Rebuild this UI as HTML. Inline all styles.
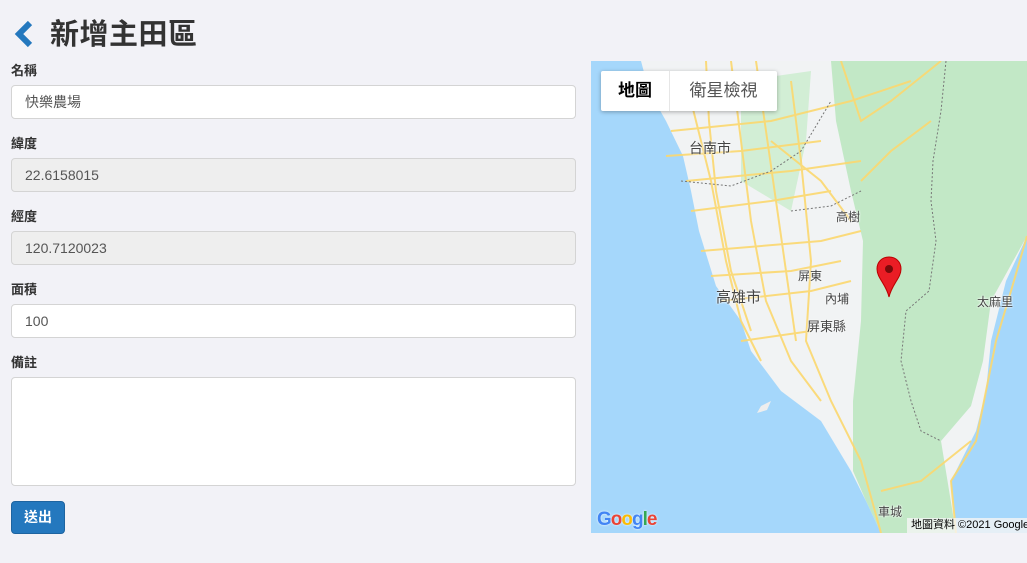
<!DOCTYPE html>
<html><head><meta charset="utf-8"><style>
*{box-sizing:border-box;margin:0;padding:0}
body{width:1027px;height:563px;background:#f2f2f7;font-family:"Liberation Sans","Noto Sans CJK TC",sans-serif;position:relative;overflow:hidden;color:#333}
.t{position:absolute;left:50px;top:15px;font-size:29px;font-weight:bold;color:#333;line-height:40px;letter-spacing:0.5px}
.lb{position:absolute;left:11px;font-size:13px;font-weight:bold;color:#333;line-height:16px}
.in{position:absolute;left:11px;width:565px;height:34px;border:1px solid #d4d4d4;border-radius:4px;background:#fff;font-size:14px;color:#555;padding-left:13px;line-height:32px}
.ro{background:#eee}
.btn{position:absolute;left:11px;top:501px;width:54px;height:33px;background:#2478be;border:1px solid #1e64a0;border-radius:4px;color:#fff;font-size:14px;font-weight:bold;text-align:center;line-height:31px}
.map{position:absolute;left:591px;top:61px;width:436px;height:472px;overflow:hidden;background:#f1f3f4}
.ml{position:absolute;font-size:13px;color:#444;text-shadow:0 0 2px #fff,0 0 2px #fff}
</style></head><body>
<svg style="position:absolute;left:12px;top:20px" width="22" height="28" viewBox="0 0 22 28"><path d="M18 3 L7 14 L18 25" fill="none" stroke="#2478be" stroke-width="6"/></svg>
<div class="t">新增主田區</div>
<div class="lb" style="top:63px">名稱</div>
<div class="in" style="top:85px">快樂農場</div>
<div class="lb" style="top:136px">緯度</div>
<div class="in ro" style="top:158px">22.6158015</div>
<div class="lb" style="top:209px">經度</div>
<div class="in ro" style="top:231px">120.7120023</div>
<div class="lb" style="top:282px">面積</div>
<div class="in" style="top:304px">100</div>
<div class="lb" style="top:355px">備註</div>
<div class="in" style="top:377px;height:109px"></div>
<div class="btn">送出</div>
<div class="map">
<svg width="436" height="472" style="position:absolute;left:0;top:0">
<path d="M240 0 L436 0 L436 175 L400 240 L392 300 L380 345 L350 380 L365 472 L290 472 L275 440 L262 410 L262 340 L270 260 L272 180 L260 130 L245 60 Z" fill="#c2e8c6"/>
<path d="M150 20 L220 10 L215 80 L200 150 L150 120 Z" fill="#d2eed5"/>
<path d="M0 0 L50 0 L58 30 L75 60 L92 95 L100 130 L108 170 L125 225 L150 260 L160 290 L190 330 L230 360 L260 410 L275 440 L290 472 L0 472 Z" fill="#a5d7fb"/>
<path d="M436 175 L436 472 L366 472 L360 420 L385 370 L395 330 L400 280 L415 220 Z" fill="#a5d7fb"/>
<g fill="none" stroke="#fcd86f" stroke-width="2" opacity=".9">
<path d="M100 40 L120 120 L135 200 L150 260 L170 300"/>
<path d="M115 0 L118 60 L125 130 L140 210 L160 270"/>
<path d="M140 0 L150 80 L160 160 L175 240 L200 300 L230 340"/>
<path d="M165 0 L175 70 L185 140 L195 210 L205 280"/>
<path d="M80 70 L180 60 L260 40 L320 20"/>
<path d="M75 95 L150 90 L230 80"/>
<path d="M95 120 L200 110 L270 100"/>
<path d="M100 150 L180 140 L240 130"/>
<path d="M110 190 L230 180 L270 170"/>
<path d="M120 215 L200 210 L250 200"/>
<path d="M200 20 L210 100 L220 200 L215 280 L240 340 L270 400 L290 472"/>
<path d="M250 0 L270 60 L300 40 L350 0"/>
<path d="M130 240 L220 230 L260 220"/>
<path d="M150 280 L220 270"/>
<path d="M180 80 L230 120 L260 160"/>
<path d="M365 472 L360 420 L385 380 L395 330 L405 280 L420 230 L436 175"/>
<path d="M290 430 L330 420 L380 380"/>
<path d="M270 120 L300 90 L340 60"/>
</g>
<g fill="none" stroke="#777" stroke-width="1" stroke-dasharray="2,2">
<path d="M355 0 L350 50 L342 100 L340 140 L345 180 L338 230 L315 250 L310 300 L320 340 L330 370 L350 380"/>
<path d="M90 120 L140 125 L180 110 L210 90 L240 40"/>
<path d="M200 150 L240 145 L270 130"/>
</g>
<path d="M170 345 L180 340 L176 349 L166 352Z" fill="#eee"/>
</svg>
<div style="position:absolute;left:10px;top:10px;width:176px;height:40px;background:#fff;border-radius:2px;box-shadow:0 1px 4px rgba(0,0,0,.3);font-size:17px;line-height:40px">
<span style="position:absolute;left:0;width:68px;text-align:center;font-weight:bold;color:#000">地圖</span>
<span style="position:absolute;left:68px;top:0;width:1px;height:40px;background:#e6e6e6"></span>
<span style="position:absolute;left:69px;width:107px;text-align:center;color:#555">衛星檢視</span>
</div>
<div class="ml" style="left:98px;top:77px;font-size:14px">台南市</div>
<div class="ml" style="left:245px;top:147px;font-size:12px">高樹</div>
<div class="ml" style="left:207px;top:206px;font-size:12px">屏東</div>
<div class="ml" style="left:125px;top:225px;font-size:15px">高雄市</div>
<div class="ml" style="left:234px;top:229px;font-size:12px">內埔</div>
<div class="ml" style="left:216px;top:255px;font-size:13px">屏東縣</div>
<div class="ml" style="left:386px;top:232px;font-size:12px">太麻里</div>
<div class="ml" style="left:287px;top:442px;font-size:12px">車城</div>
<svg style="position:absolute;left:285px;top:195px" width="26" height="42" viewBox="0 0 26 42"><path d="M13 1C6 1 1 6 1 13C1 22 10 28 13 41C16 28 25 22 25 13C25 6 20 1 13 1Z" fill="#ea1d25" stroke="#b00" stroke-width="1"/><circle cx="13" cy="13" r="4" fill="#7a0a0a"/></svg>
<div style="position:absolute;left:6px;top:448px;font-size:19px;font-weight:bold;letter-spacing:-1px;text-shadow:0 0 2px #fff"><span style="color:#4285f4">G</span><span style="color:#ea4335">o</span><span style="color:#fbbc05">o</span><span style="color:#4285f4">g</span><span style="color:#34a853">l</span><span style="color:#ea4335">e</span></div>
<div style="position:absolute;right:0;top:457px;height:15px;width:120px;background:rgba(245,245,245,.8);font-size:11px;line-height:15px;padding-left:4px;white-space:nowrap;color:#000">地圖資料 ©2021 Google</div>
</div>
</body></html>
